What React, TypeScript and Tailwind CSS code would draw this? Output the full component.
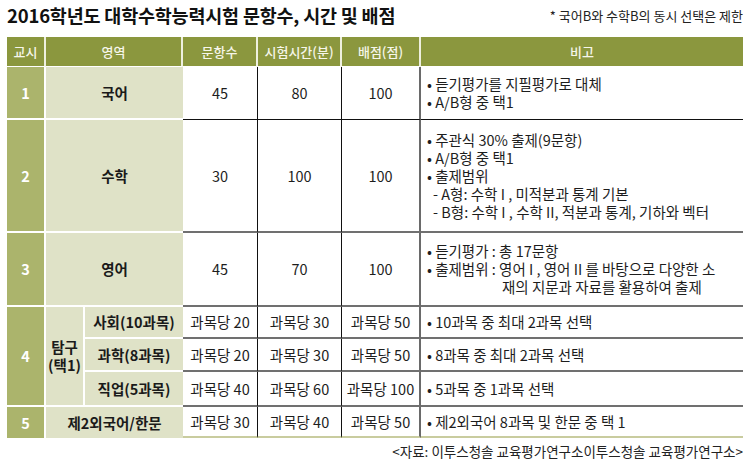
const head = "flex items-center justify-center bg-[#8b973e] text-[13px] font-medium text-[#f6f6ea] border-b border-white";
const num = "flex items-center justify-center bg-[#abb46c] text-[14.5px] font-bold text-white border-r-2 border-white";
const area = "flex items-center justify-center bg-[#dfe2c7] text-[14.5px] font-bold text-[#1a1a1a]";
const cellLine = "flex items-center justify-center text-[14.5px] text-[#1d1d1d] whitespace-nowrap";

function Note({ lines }: { lines: React.ReactNode[] }) {
  return (
    <div className="flex flex-col justify-center pl-[6px] text-[14.5px] leading-[18px] text-[#1d1d1d] whitespace-nowrap">
      {lines.map((l, i) => (
        <div key={i}>{l}</div>
      ))}
    </div>
  );
}

export default function App() {
  return (
    <div className="w-[751px] h-[464px] bg-white pl-[7px] pr-[8px] pt-[3px] font-['Noto_Sans_CJK_KR','Noto_Sans',sans-serif] text-[#1d1d1d]">
      <div className="flex h-[26px] items-center justify-between">
        <h1 className="text-[18.5px] font-bold tracking-[-0.2px] text-[#111]">2016학년도 대학수학능력시험 문항수, 시간 및 배점</h1>
        <span className="text-[13px] text-[#222]">* 국어B와 수학B의 동시 선택은 제한</span>
      </div>

      <div className="mt-[8px] grid grid-cols-[39px_39px_98px_75px_84px_79px_322px] grid-rows-[30px_53px_113px_74px_32px_33px_35px_31px]">
        {/* header */}
        <div className={`${head} border-r-2 border-r-[#eef0df]`}>교시</div>
        <div className={`${head} col-span-2 border-r-2 border-r-[#eef0df]`}>영역</div>
        <div className={`${head} border-r-2 border-r-[#eef0df]`}>문항수</div>
        <div className={`${head} border-r-2 border-r-[#eef0df]`}>시험시간(분)</div>
        <div className={`${head} border-r-2 border-r-[#eef0df]`}>배점(점)</div>
        <div className={head}>비고</div>

        {/* 1 국어 */}
        <div className={`${num} border-b-2`}>1</div>
        <div className={`${area} col-span-2 border-b-2 border-white`}>국어</div>
        <div className={`${cellLine} border-r border-b border-[#111]`}>45</div>
        <div className={`${cellLine} border-r border-b border-[#111]`}>80</div>
        <div className={`${cellLine} border-r-2 border-r-[#6a6a6a] border-b border-b-[#111]`}>100</div>
        <div className="flex border-b border-[#111]">
          <Note lines={["• 듣기평가를 지필평가로 대체", "• A/B형 중 택1"]} />
        </div>

        {/* 2 수학 */}
        <div className={`${num} border-b-2`}>2</div>
        <div className={`${area} col-span-2 border-b-2 border-white`}>수학</div>
        <div className={`${cellLine} border-r border-r-[#111] border-b-2 border-b-[#707070]`}>30</div>
        <div className={`${cellLine} border-r border-r-[#111] border-b-2 border-b-[#707070]`}>100</div>
        <div className={`${cellLine} border-r-2 border-r-[#6a6a6a] border-b-2 border-b-[#707070]`}>100</div>
        <div className="flex border-b-2 border-[#707070]">
          <Note
            lines={[
              "• 주관식 30% 출제(9문항)",
              "• A/B형 중 택1",
              "• 출제범위",
              <span className="pl-[6px]">- A형: 수학 I , 미적분과 통계 기본</span>,
              <span className="pl-[6px]">- B형: 수학 I , 수학 II, 적분과 통계, 기하와 벡터</span>,
            ]}
          />
        </div>

        {/* 3 영어 */}
        <div className={`${num} border-b-2`}>3</div>
        <div className={`${area} col-span-2 border-b-2 border-white`}>영어</div>
        <div className={`${cellLine} border-r border-r-[#111] border-b-2 border-b-[#707070]`}>45</div>
        <div className={`${cellLine} border-r border-r-[#111] border-b-2 border-b-[#707070]`}>70</div>
        <div className={`${cellLine} border-r-2 border-r-[#6a6a6a] border-b-2 border-b-[#707070]`}>100</div>
        <div className="flex border-b-2 border-[#707070]">
          <Note
            lines={[
              "• 듣기평가 : 총 17문항",
              "• 출제범위 : 영어 I , 영어 II 를 바탕으로 다양한 소",
              <span className="pl-[75px]">재의 지문과 자료를 활용하여 출제</span>,
            ]}
          />
        </div>

        {/* 4 탐구 */}
        <div className={`${num} row-span-3 border-b-2`}>4</div>
        <div className={`${area} row-span-3 flex-col leading-[18px] border-r-2 border-b-2 border-white`}>
          <span>탐구</span>
          <span>(택1)</span>
        </div>
        <div className={`${area} border-b-2 border-white`}>사회(10과목)</div>
        <div className={`${cellLine} border-r border-r-[#111] border-b-2 border-b-[#707070]`}>과목당 20</div>
        <div className={`${cellLine} border-r border-r-[#111] border-b-2 border-b-[#707070]`}>과목당 30</div>
        <div className={`${cellLine} border-r-2 border-r-[#6a6a6a] border-b-2 border-b-[#707070]`}>과목당 50</div>
        <div className="flex border-b-2 border-[#707070]">
          <Note lines={["• 10과목 중 최대 2과목 선택"]} />
        </div>

        <div className={`${area} border-b-2 border-white`}>과학(8과목)</div>
        <div className={`${cellLine} border-r border-r-[#111] border-b-2 border-b-[#707070]`}>과목당 20</div>
        <div className={`${cellLine} border-r border-r-[#111] border-b-2 border-b-[#707070]`}>과목당 30</div>
        <div className={`${cellLine} border-r-2 border-r-[#6a6a6a] border-b-2 border-b-[#707070]`}>과목당 50</div>
        <div className="flex border-b-2 border-[#707070]">
          <Note lines={["• 8과목 중 최대 2과목 선택"]} />
        </div>

        <div className={`${area} border-b-2 border-white`}>직업(5과목)</div>
        <div className={`${cellLine} border-r border-r-[#111] border-b-2 border-b-[#707070]`}>과목당 40</div>
        <div className={`${cellLine} border-r border-r-[#111] border-b-2 border-b-[#707070]`}>과목당 60</div>
        <div className={`${cellLine} border-r-2 border-r-[#6a6a6a] border-b-2 border-b-[#707070]`}>과목당 100</div>
        <div className="flex border-b-2 border-[#707070]">
          <Note lines={["• 5과목 중 1과목 선택"]} />
        </div>

        {/* 5 제2외국어 */}
        <div className={num}>5</div>
        <div className={`${area} col-span-2`}>제2외국어/한문</div>
        <div className={`${cellLine} border-r border-r-[#111] border-b-2 border-b-[#c9cc9f]`}>과목당 30</div>
        <div className={`${cellLine} border-r border-r-[#111] border-b-2 border-b-[#c9cc9f]`}>과목당 40</div>
        <div className={`${cellLine} border-r-2 border-r-[#6a6a6a] border-b-2 border-b-[#c9cc9f]`}>과목당 50</div>
        <div className="flex border-b-2 border-[#c9cc9f]">
          <Note lines={["• 제2외국어 8과목 및 한문 중 택 1"]} />
        </div>
      </div>

      <div className="mt-[4px] text-right text-[13.5px] leading-[18px] text-[#222]">
        &lt;자료: 이투스청솔 교육평가연구소이투스청솔 교육평가연구소&gt;
      </div>
    </div>
  );
}
